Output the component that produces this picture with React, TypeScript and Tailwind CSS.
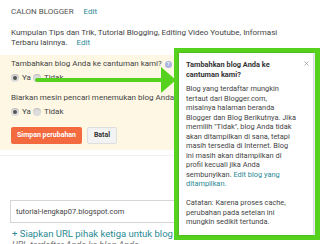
import { X } from 'lucide-react';

const Radio = ({ checked }: { checked?: boolean }) => (
    <span className="flex h-[8px] w-[8px] items-center justify-center rounded-full bg-[#dcdcdc] shadow-[inset_0_1px_1px_rgba(0,0,0,0.15)]">
        {checked && <span className="h-[4px] w-[4px] rounded-full bg-[#555]" />}
    </span>
);

const RadioRow = () => (
    <div className="mt-[4px] flex h-[10px] items-center text-[8px] leading-[10px] text-[#444]">
        <Radio checked />
        <span className="ml-[3px]">Ya</span>
        <span className="ml-[2px]">
            <Radio />
        </span>
        <span className="ml-[3px]">Tidak</span>
    </div>
);

const helpText = [
    'Blog yang terdaftar mungkin',
    'tertaut dari Blogger.com,',
    'misalnya halaman beranda',
    'Blogger dan Blog Berikutnya. Jika',
    'memilih "Tidak", blog Anda tidak',
    'akan ditampilkan di sana, tetapi',
    'masih tersedia di Internet. Blog',
    'ini masih akan ditampilkan di',
    'profil kecuali jika Anda',
];

const noteText = ['Catatan: Karena proses cache,', 'perubahan pada setelan ini', 'mungkin sedikit tertunda.'];

export default function App() {
    return (
        <div className="relative h-[244px] w-[320px] overflow-hidden bg-white font-['Roboto',sans-serif]">
            <div className="px-[11px] pt-[7px] text-[8px] leading-[10px]">
                <div className="flex text-[#555]">
                    <span>CALON BLOGGER</span>
                    <span className="ml-[10px] text-[#2a8a93]">Edit</span>
                </div>
                <p className="mt-[11px] text-[#444]">
                    Kumpulan Tips dan Trik, Tutorial Blogging, Editing Video Youtube, Informasi
                    <br />
                    Terbaru lainnya.<span className="ml-[9px] text-[#2a8a93]">Edit</span>
                </p>
            </div>

            <div className="mt-[7px] h-[95px] bg-[#fdf7e4] px-[11px] pt-[4px]">
                <div className="flex items-center text-[8px] leading-[10px] text-[#444]">
                    <span>Tambahkan blog Anda ke cantuman kami?</span>
                    <span className="ml-[3px] flex h-[7px] w-[7px] items-center justify-center rounded-full bg-[#aab3df] text-[5px] font-bold leading-none text-white">
                        ?
                    </span>
                </div>
                <RadioRow />
                <div className="mt-[10px] text-[8px] leading-[10px] text-[#444]">
                    Biarkan mesin pencari menemukan blog Anda
                </div>
                <RadioRow />
                <div className="mt-[10px] flex gap-[5px]">
                    <button className="h-[17px] w-[71px] rounded-[2px] bg-[#f26a3e] text-[7px] font-bold text-white">
                        Simpan perubahan
                    </button>
                    <button className="h-[17px] w-[30px] rounded-[2px] border border-[#dedede] bg-[#f3f3f3] text-[7px] font-bold text-[#333]">
                        Batal
                    </button>
                </div>
            </div>
            <div className="mt-[5px] h-px bg-[#f0f0f0]" />

            <div className="px-[10px] pt-[44px]">
                <div className="flex h-[23px] w-[200px] items-center border border-[#d6d6d6] px-[5px] text-[7.5px] text-[#444]">
                    tutorial-lengkap07.blogspot.com
                </div>
                <div className="mt-[5px] whitespace-nowrap pl-[2px] text-[9.5px] leading-[12px] text-[#2a8a93]">
                    + Siapkan URL pihak ketiga untuk blog Anda
                </div>
                <div className="whitespace-nowrap pl-[2px] text-[9px] italic leading-[10px] text-[#777]">
                    URL terdaftar Anda ke blog Anda
                </div>
            </div>

            <svg className="absolute left-0 top-0" width="320" height="244">
                <rect x="35" y="78" width="130" height="4" rx="2" fill="#55d11e" />
                <polygon points="161,67 176,80 161,93" fill="#55d11e" />
            </svg>

            <div className="absolute left-[174px] top-[48px] h-[192px] w-[146px] border-[5px] border-[#55d11e] bg-[#eeeeee]">
                <div className="relative h-full w-[134px] bg-white px-[7px] pt-[7px] text-[7.4px] leading-[9.5px] text-[#444] shadow-[0_0_2px_rgba(0,0,0,0.25)]">
                    <X className="absolute right-[3px] top-[7px] h-[7px] w-[7px] text-[#999]" strokeWidth={2.5} />
                    <div className="font-bold text-[#333]">
                        Tambahkan blog Anda ke
                        <br />
                        cantuman kami?
                    </div>
                    <div className="mt-[5px] whitespace-nowrap">
                        {helpText.map((line) => (
                            <div key={line}>{line}</div>
                        ))}
                        <div>
                            sembunyikan. <span className="text-[#2a8a93]">Edit blog yang</span>
                        </div>
                        <div className="text-[#2a8a93]">ditampilkan.</div>
                    </div>
                    <div className="mt-[9.5px] whitespace-nowrap">
                        {noteText.map((line) => (
                            <div key={line}>{line}</div>
                        ))}
                    </div>
                </div>
            </div>
        </div>
    );
}
